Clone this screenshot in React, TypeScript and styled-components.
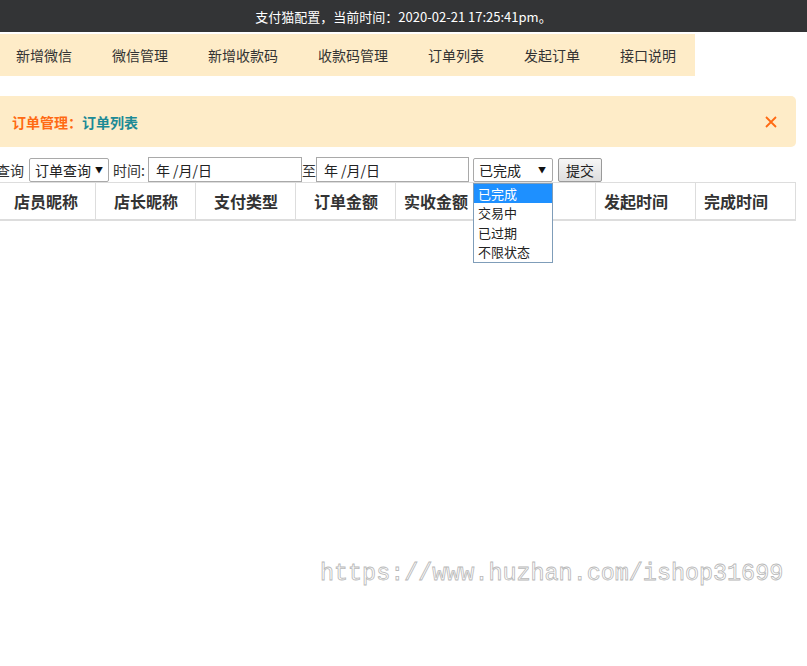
import React from 'react';
import styled, { createGlobalStyle } from 'styled-components';

const GlobalStyle = createGlobalStyle`
  html, body {
    margin: 0;
    padding: 0;
    background: #fff;
    overflow: hidden;
  }
  body {
    font-family: "Noto Sans CJK SC", "Noto Sans", sans-serif;
    color: #333;
  }
`;

const Page = styled.div`
  position: relative;
  width: 807px;
  height: 666px;
  overflow: hidden;
`;

const TopBar = styled.div`
  height: 32px;
  background: #333436;
  color: #fff;
  font-size: 13px;
  display: flex;
  align-items: center;
  justify-content: center;
`;

const Nav = styled.div`
  margin-top: 2px;
  width: 695px;
  height: 42px;
  box-sizing: border-box;
  padding-left: 16px;
  background: #feecc8;
  display: flex;
  align-items: center;
`;

const NavItem = styled.span`
  font-size: 14px;
  color: #333;
  margin-right: 40px;
  white-space: nowrap;
`;

const Content = styled.div`
  margin-left: -4px;
  width: 800px;
`;

const Alert = styled.div`
  margin-top: 20px;
  height: 51px;
  box-sizing: border-box;
  padding: 0 19px 0 16px;
  background: #feecc8;
  border-radius: 5px;
  display: flex;
  align-items: center;
  justify-content: space-between;
  font-size: 14px;
  font-weight: bold;
`;

const Crumb = styled.span<{ $tone: 'orange' | 'teal' }>`
  color: ${({ $tone }) => ($tone === 'orange' ? '#ff6a13' : '#1d8a96')};
`;

const FormRow = styled.div`
  margin-top: 10px;
  height: 25px;
  display: flex;
  align-items: center;
  font-size: 14px;
`;

const Label = styled.span<{ $ml?: number }>`
  margin-left: ${({ $ml }) => $ml ?? 0}px;
  white-space: nowrap;
  color: #333;
`;

const SelectBox = styled.div<{ $ml: number }>`
  position: relative;
  margin-left: ${({ $ml }) => $ml}px;
  width: 80px;
  height: 24px;
  box-sizing: border-box;
  border: 1px solid #a9a9a9;
  border-radius: 2px;
  padding: 0 6px 0 5px;
  display: flex;
  align-items: center;
  justify-content: space-between;
  background: #fff;
  color: #222;
  white-space: nowrap;
`;

const Arrow = styled.span`
  font-size: 8px;
  color: #111;
  margin-left: 4px;
`;

const DateBox = styled.div<{ $ml: number; $w: number }>`
  margin-left: ${({ $ml }) => $ml}px;
  width: ${({ $w }) => $w}px;
  height: 25px;
  box-sizing: border-box;
  border: 1px solid #a9a9a9;
  padding-left: 7px;
  display: flex;
  align-items: center;
  color: #222;
  white-space: pre;
`;

const SubmitButton = styled.button`
  margin-left: 5px;
  width: 44px;
  height: 24px;
  box-sizing: border-box;
  border: 1px solid #9a9a9a;
  border-radius: 2px;
  background: linear-gradient(#f6f6f6, #dedede);
  font-family: inherit;
  font-size: 14px;
  color: #222;
  padding: 0;
`;

const Dropdown = styled.div`
  position: absolute;
  top: 24px;
  left: -1px;
  width: 80px;
  box-sizing: border-box;
  border: 1px solid #7f9db9;
  background: #fff;
  z-index: 5;
`;

const Option = styled.div<{ $active?: boolean }>`
  height: 19.5px;
  line-height: 19.5px;
  padding-left: 4px;
  font-size: 13px;
  font-weight: normal;
  background: ${({ $active }) => ($active ? '#1e90ff' : 'transparent')};
  color: ${({ $active }) => ($active ? '#fff' : '#222')};
`;

const HeadRow = styled.div`
  display: grid;
  grid-template-columns: repeat(8, 100px);
  border-top: 1px solid #ddd;
  border-bottom: 2px solid #ddd;
`;

const HeadCell = styled.div<{ $indent: boolean }>`
  height: 36px;
  box-sizing: border-box;
  padding-left: ${({ $indent }) => ($indent ? 18 : 8)}px;
  border-right: 1px solid #ddd;
  display: flex;
  align-items: center;
  font-size: 16px;
  font-weight: bold;
  color: #333;
  white-space: nowrap;
`;

const Watermark = styled.div`
  position: absolute;
  left: 320px;
  top: 561px;
  font-family: "Liberation Mono", monospace;
  font-size: 23.4px;
  color: #fff;
  -webkit-text-stroke: 0.8px #b8b8b8;
  white-space: nowrap;
`;

const navItems = ['新增微信', '微信管理', '新增收款码', '收款码管理', '订单列表', '发起订单', '接口说明'];
const heads = ['店员昵称', '店长昵称', '支付类型', '订单金额', '实收金额', '', '发起时间', '完成时间'];
const statuses = ['已完成', '交易中', '已过期', '不限状态'];

export default function App() {
  return (
    <Page>
      <GlobalStyle />
      <TopBar>支付猫配置，当前时间：2020-02-21 17:25:41pm。</TopBar>
      <Nav>
        {navItems.map((n) => (
          <NavItem key={n}>{n}</NavItem>
        ))}
      </Nav>
      <Content>
        <Alert>
          <span>
            <Crumb $tone='orange'>订单管理：</Crumb>
            <Crumb $tone='teal'>订单列表</Crumb>
          </span>
          <svg width='12' height='12' viewBox='0 0 12 12'>
            <path d='M1 1L11 11M11 1L1 11' stroke='#ff6a13' strokeWidth='1.8' />
          </svg>
        </Alert>
        <FormRow>
          <Label>查询</Label>
          <SelectBox $ml={5}>
            <span>订单查询</span>
            <Arrow>▼</Arrow>
          </SelectBox>
          <Label $ml={4}>时间:</Label>
          <DateBox $ml={3} $w={154}>年 /月/日</DateBox>
          <Label>至</Label>
          <DateBox $ml={0} $w={153}>年 /月/日</DateBox>
          <SelectBox $ml={4}>
            <span>已完成</span>
            <Arrow>▼</Arrow>
            <Dropdown>
              {statuses.map((s, i) => (
                <Option key={s} $active={i === 0}>
                  {s}
                </Option>
              ))}
            </Dropdown>
          </SelectBox>
          <SubmitButton>提交</SubmitButton>
        </FormRow>
        <HeadRow>
          {heads.map((h, i) => (
            <HeadCell key={i} $indent={i < 4}>
              {h}
            </HeadCell>
          ))}
        </HeadRow>
      </Content>
      <Watermark>https://www.huzhan.com/ishop31699</Watermark>
    </Page>
  );
}
